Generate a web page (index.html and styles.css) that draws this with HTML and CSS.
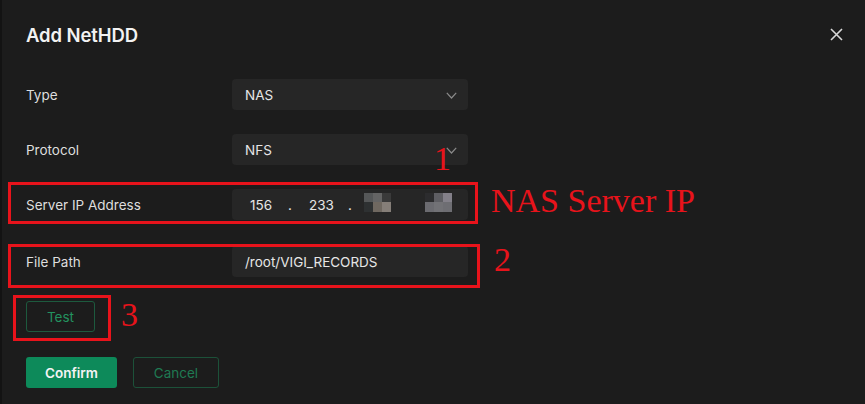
FILE: index.html
```html
<!DOCTYPE html>
<html>
<head>
<meta charset="utf-8">
<link rel="stylesheet" href="styles.css">
</head>
<body>
<div class="dialog">
  <div class="header">
    <div class="title">Add NetHDD</div>
    <svg class="close" width="13" height="13" viewBox="0 0 13 13"><path d="M1 1L12 12M12 1L1 12" stroke="#d8d8d8" stroke-width="1.6" fill="none"/></svg>
  </div>
  <div class="form">
    <div class="row">
      <div class="label">Type</div>
      <div class="field select"><span>NAS</span><svg class="chev" width="11" height="7" viewBox="0 0 11 7"><path d="M0.8 0.8L5.5 6L10.2 0.8" stroke="#8a8a8a" stroke-width="1.2" fill="none"/></svg></div>
    </div>
    <div class="row">
      <div class="label">Protocol</div>
      <div class="field select"><span>NFS</span><svg class="chev" width="11" height="7" viewBox="0 0 11 7"><path d="M0.8 0.8L5.5 6L10.2 0.8" stroke="#8a8a8a" stroke-width="1.2" fill="none"/></svg></div>
    </div>
    <div class="row">
      <div class="label">Server IP Address</div>
      <div class="field ip">
        <span class="seg s1">156</span><span class="dot d1">.</span><span class="seg s2">233</span><span class="dot d2">.</span>
        <span class="mosaic m1"><i class="c a1"></i><i class="c a2"></i><i class="c a3"></i><i class="c a4"></i><i class="c a5"></i><i class="c a6"></i></span>
        <span class="mosaic m2"><i class="c b1"></i><i class="c b2"></i><i class="c b3"></i><i class="c b4"></i><i class="c b5"></i><i class="c b6"></i></span>
      </div>
    </div>
    <div class="row row-path">
      <div class="label">File Path</div>
      <div class="field"><span>/root/VIGI_RECORDS</span></div>
    </div>
  </div>
  <button class="btn btn-outline btn-test">Test</button>
  <div class="actions">
    <button class="btn btn-primary">Confirm</button>
    <button class="btn btn-outline btn-cancel">Cancel</button>
  </div>

  <div class="mark box-ip"></div>
  <div class="mark box-path"></div>
  <div class="mark box-test"></div>
  <div class="note n1">1</div>
  <div class="note n-ip">NAS Server IP</div>
  <div class="note n2">2</div>
  <div class="note n3">3</div>
</div>
</body>
</html>
```
FILE: styles.css
```css
* { box-sizing: border-box; }
html, body { margin: 0; padding: 0; }
body {
  background: #1c1c1c;
  width: 865px;
  height: 404px;
  overflow: hidden;
  font-family: Inter, "Noto Sans", "Liberation Sans", sans-serif;
  color: #e2e2e2;
}
.dialog {
  position: relative;
  height: 404px;
  padding-left: 24px;
  border-left: 2px solid #131313;
}
.header {
  height: 68px;
  display: flex;
  align-items: center;
  justify-content: space-between;
  padding-right: 22px;
}
.title {
  font-size: 18.5px;
  font-weight: 600;
  color: #f2f2f2;
  letter-spacing: -0.1px;
  padding-top: 1px;
}
.close { display: block; }
.form {
  margin-top: 11px;
  display: flex;
  flex-direction: column;
  gap: 24px;
}
.row {
  display: flex;
  align-items: center;
  height: 31px;
}
.row-path { margin-top: 2px; }
.label {
  width: 206px;
  font-size: 13.5px;
  color: #dedede;
}
.field {
  width: 236px;
  height: 31px;
  background: #262626;
  border-radius: 4px;
  display: flex;
  align-items: center;
  padding-left: 13px;
  font-size: 13.5px;
  color: #e6e6e6;
}
.select { justify-content: space-between; padding-right: 11px; }
.chev { display: block; margin-top: 1px; }
.ip { padding-left: 18px; }
.seg, .dot { display: inline-block; }
.s1 { width: 38px; }
.d1 { width: 21px; }
.s2 { width: 39px; }
.d2 { width: 16px; }
.mosaic {
  display: grid;
  grid-template-columns: 9px 9px 9px;
  grid-template-rows: 9px 10px;
  margin-top: -4px;
}
.m2 { margin-left: 34px; }
.c { display: block; }
.a1 { background: #555758; }
.a2 { background: #646464; }
.a3 { background: #3a3a3a; }
.a4 { background: #2e3132; }
.a5 { background: #6f6860; }
.a6 { background: #857e78; }
.b1 { background: #2c2c2e; }
.b2 { background: #5e5e63; }
.b3 { background: #838089; }
.b4 { background: #6b6b70; }
.b5 { background: #727276; }
.b6 { background: #6e6e73; }

.btn {
  font-family: Inter, "Noto Sans", "Liberation Sans", sans-serif;
  height: 31px;
  border-radius: 3px;
  font-size: 13.5px;
  padding: 0;
  cursor: pointer;
}
.btn-outline {
  background: transparent;
  border: 1px solid #1d5a3e;
  color: #23925f;
}
.btn-test {
  display: block;
  width: 69px;
  margin-top: 24px;
}
.actions {
  display: flex;
  gap: 16px;
  margin-top: 25px;
}
.btn-primary {
  width: 91px;
  background: #0d8a5a;
  border: none;
  color: #f4f4f4;
  font-weight: 600;
}
.btn-cancel { width: 86px; color: #1f7a52; border-color: #1c5139; }

.mark {
  position: absolute;
  border: 3px solid #e8131b;
}
.box-ip { left: 6px; top: 182px; width: 470px; height: 42px; }
.box-path { left: 6px; top: 244px; width: 472px; height: 44px; }
.box-test { left: 11px; top: 295px; width: 98px; height: 46px; }
.note {
  position: absolute;
  font-family: "Liberation Serif", "Times New Roman", serif;
  font-size: 34px;
  line-height: 34px;
  color: #e8131b;
  white-space: nowrap;
}
.n1 { left: 432px; top: 142px; }
.n-ip { left: 489px; top: 184px; }
.n2 { left: 492px; top: 243px; }
.n3 { left: 119px; top: 298px; }
```
